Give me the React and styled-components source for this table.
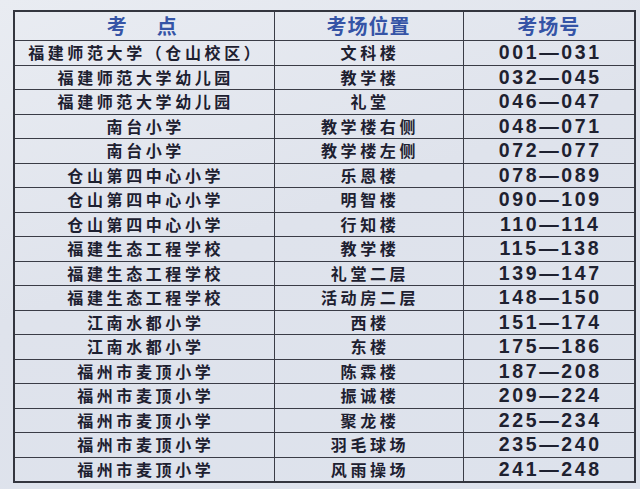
import React from "react";
import styled, { createGlobalStyle } from "styled-components";

const Global = createGlobalStyle`
  html, body { margin: 0; padding: 0; }
  body {
    width: 640px;
    height: 489px;
    overflow: hidden;
    background: linear-gradient(160deg, #e9ecf2 0%, #dfe3ec 45%, #dde2ec 100%);
    font-family: "Noto Sans CJK SC", "Noto Sans", sans-serif;
  }
`;

const Page = styled.div`
  padding: 10px 6px 0 13px;
`;

const Table = styled.table`
  width: 621px;
  border-collapse: collapse;
  border: 2px solid #34363f;
  table-layout: fixed;
`;

const HeadCell = styled.th`
  height: 28px;
  padding: 0;
  border: 1.5px solid #3a3c46;
  color: #3554a6;
  font-size: 20px;
  font-weight: 700;
  letter-spacing: ${(p) => p.$spacing || "1px"};
  line-height: 28px;
  text-align: center;
  white-space: nowrap;
`;

const Cell = styled.td`
  height: 23.5px;
  padding: 0;
  border: 1.5px solid #3a3c46;
  color: #1d2030;
  font-size: 16px;
  font-weight: 700;
  letter-spacing: 3.6px;
  line-height: 23px;
  text-align: center;
  white-space: nowrap;
  text-indent: 3px;
`;

const NumCell = styled(Cell)`
  font-family: "Liberation Sans", Arial, sans-serif;
  font-size: 19.5px;
  letter-spacing: 2.6px;
  font-weight: 700;
  color: #1e2130;
`;

const rows = [
  ["福建师范大学（仓山校区）", "文科楼", "001—031"],
  ["福建师范大学幼儿园", "教学楼", "032—045"],
  ["福建师范大学幼儿园", "礼堂", "046—047"],
  ["南台小学", "教学楼右侧", "048—071"],
  ["南台小学", "教学楼左侧", "072—077"],
  ["仓山第四中心小学", "乐恩楼", "078—089"],
  ["仓山第四中心小学", "明智楼", "090—109"],
  ["仓山第四中心小学", "行知楼", "110—114"],
  ["福建生态工程学校", "教学楼", "115—138"],
  ["福建生态工程学校", "礼堂二层", "139—147"],
  ["福建生态工程学校", "活动房二层", "148—150"],
  ["江南水都小学", "西楼", "151—174"],
  ["江南水都小学", "东楼", "175—186"],
  ["福州市麦顶小学", "陈霖楼", "187—208"],
  ["福州市麦顶小学", "振诚楼", "209—224"],
  ["福州市麦顶小学", "聚龙楼", "225—234"],
  ["福州市麦顶小学", "羽毛球场", "235—240"],
  ["福州市麦顶小学", "风雨操场", "241—248"],
];

export default function App() {
  return (
    <>
      <Global />
      <Page>
        <Table>
          <colgroup>
            <col style={{ width: 260 }} />
            <col style={{ width: 189 }} />
            <col style={{ width: 172 }} />
          </colgroup>
          <thead>
            <tr>
              <HeadCell $spacing="5px">考　点</HeadCell>
              <HeadCell>考场位置</HeadCell>
              <HeadCell>考场号</HeadCell>
            </tr>
          </thead>
          <tbody>
            {rows.map((r, i) => (
              <tr key={i}>
                <Cell>{r[0]}</Cell>
                <Cell>{r[1]}</Cell>
                <NumCell>{r[2]}</NumCell>
              </tr>
            ))}
          </tbody>
        </Table>
      </Page>
    </>
  );
}
